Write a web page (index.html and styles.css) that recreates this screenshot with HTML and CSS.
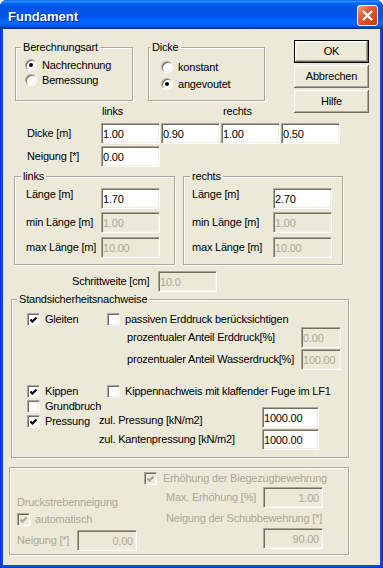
FILE: index.html
```html
<!DOCTYPE html>
<html lang="de">
  <head>
    <meta charset="UTF-8" />
    <title>Fundament</title>
    <link rel="stylesheet" href="styles.css">
  </head>
  <body>
    <div class="window">
      <div class="titlebar">
        <span class="title">Fundament</span>
        <span class="close-btn">
          <svg width="19" height="19" viewBox="0 0 19 19">
            <path d="M5 5 L14 14 M14 5 L5 14" stroke="#fff" stroke-width="2.4" fill="none" />
          </svg>
        </span>
      </div>

      <div class="client">
        <div class="top">
          <div class="top-left">
            <div class="groups">
              <fieldset class="group calc-group">
                <legend>Berechnungsart</legend>
                <div class="group-body">
                  <label class="option"><span class="radio checked"></span>Nachrechnung</label>
                  <label class="option"><span class="radio"></span>Bemessung</label>
                </div>
              </fieldset>
              <fieldset class="group thick-group">
                <legend>Dicke</legend>
                <div class="group-body">
                  <label class="option"><span class="radio"></span>konstant</label>
                  <label class="option"><span class="radio checked"></span>angevoutet</label>
                </div>
              </fieldset>
            </div>
            <div class="col-heads">
              <span class="head-links">links</span>
              <span>rechts</span>
            </div>
          </div>
          <div class="buttons">
            <button class="btn btn-default">OK</button>
            <button class="btn">Abbrechen</button>
            <button class="btn">Hilfe</button>
          </div>
        </div>

        <div class="field-row dicke-row">
          <span class="row-label">Dicke [m]</span>
          <input class="edit" value="1.00">
          <input class="edit" value="0.90">
          <input class="edit" value="1.00">
          <input class="edit" value="0.50">
        </div>
        <div class="field-row neigung-row">
          <span class="row-label">Neigung [*]</span>
          <input class="edit" value="0.00">
        </div>

        <div class="sides">
          <fieldset class="group side-group side-links">
            <legend>links</legend>
            <div class="group-body">
              <div class="len-row"><span class="len-label top-label">Länge [m]</span><input class="edit" value="1.70"></div>
              <div class="len-row"><span class="len-label">min Länge [m]</span><input class="edit" value="1.00" disabled></div>
              <div class="len-row"><span class="len-label">max Länge [m]</span><input class="edit" value="10.00" disabled></div>
            </div>
          </fieldset>
          <fieldset class="group side-group side-rechts">
            <legend>rechts</legend>
            <div class="group-body">
              <div class="len-row"><span class="len-label top-label">Länge [m]</span><input class="edit" value="2.70"></div>
              <div class="len-row"><span class="len-label">min Länge [m]</span><input class="edit" value="1.00" disabled></div>
              <div class="len-row"><span class="len-label">max Länge [m]</span><input class="edit" value="10.00" disabled></div>
            </div>
          </fieldset>
        </div>

        <div class="field-row step-row">
          <span class="step-label">Schrittweite [cm]</span>
          <input class="edit" value="10.0" disabled>
        </div>

        <fieldset class="group checks-group">
          <legend>Standsicherheitsnachweise</legend>
          <div class="group-body">
            <div class="slide-block">
              <label class="check col-a">
                <span class="check-box"><svg width="11" height="11"><polyline points="2.5,5.5 4.5,7.5 8.5,3.5" /></svg></span>Gleiten
              </label>
              <div class="col-b">
                <label class="check"><span class="check-box"></span>passiven Erddruck berücksichtigen</label>
                <div class="pct-row">
                  <span class="pct-label">prozentualer Anteil Erddruck[%]</span>
                  <input class="edit pct-edit" value="0.00" disabled>
                </div>
                <div class="pct-row">
                  <span class="pct-label">prozentualer Anteil Wasserdruck[%]</span>
                  <input class="edit pct-edit" value="100.00" disabled>
                </div>
              </div>
            </div>

            <div class="tilt-row">
              <label class="check col-a">
                <span class="check-box"><svg width="11" height="11"><polyline points="2.5,5.5 4.5,7.5 8.5,3.5" /></svg></span>Kippen
              </label>
              <label class="check"><span class="check-box"></span>Kippennachweis mit klaffender Fuge im LF1</label>
            </div>

            <div class="press-block">
              <div class="press-checks">
                <label class="check"><span class="check-box"></span>Grundbruch</label>
                <label class="check">
                  <span class="check-box"><svg width="11" height="11"><polyline points="2.5,5.5 4.5,7.5 8.5,3.5" /></svg></span>Pressung
                </label>
              </div>
              <div class="press-fields">
                <div class="press-row">
                  <span class="press-label first-label">zul. Pressung [kN/m2]</span>
                  <input class="edit press-edit" value="1000.00">
                </div>
                <div class="press-row">
                  <span class="press-label">zul. Kantenpressung [kN/m2]</span>
                  <input class="edit press-edit" value="1000.00">
                </div>
              </div>
            </div>
          </div>
        </fieldset>

        <fieldset class="group shear-group">
          <div class="shear-body">
            <div class="shear-left">
              <div class="dim strut-title">Druckstrebenneigung</div>
              <label class="check dim auto-check">
                <span class="check-box off"><svg width="11" height="11"><polyline points="2.5,5.5 4.5,7.5 8.5,3.5" /></svg></span>automatisch
              </label>
              <div class="strut-row">
                <span class="dim strut-label">Neigung [*]</span>
                <input class="edit num-edit" value="0.00" disabled>
              </div>
            </div>
            <div class="shear-right">
              <label class="check dim raise-check">
                <span class="check-box off"><svg width="11" height="11"><polyline points="2.5,5.5 4.5,7.5 8.5,3.5" /></svg></span>Erhöhung der Biegezugbewehrung
              </label>
              <div class="raise-row">
                <span class="dim raise-label">Max. Erhöhung [%]</span>
                <input class="edit num-edit" value="1.00" disabled>
              </div>
              <div class="dim stirrup-title">Neigung der Schubbewehrung [*]</div>
              <div class="stirrup-row">
                <input class="edit num-edit" value="90.00" disabled>
              </div>
            </div>
          </div>
        </fieldset>
      </div>
    </div>
  </body>
</html>
```

FILE: styles.css
```css
* {
  box-sizing: border-box;
}
body {
  margin: 0;
  background: #fff;
  font-family: "Liberation Sans", Arial, sans-serif;
  font-size: 11px;
  line-height: 13px;
  letter-spacing: -0.2px;
  color: #000;
}

/* window frame */
.window {
  width: 383px;
  height: 568px;
  display: flex;
  flex-direction: column;
  background: #0b4ae0;
  border-radius: 7px 7px 0 0;
  overflow: hidden;
  box-shadow: inset 1px 0 #0831d9, inset -1px 0 #0831d9, inset 0 -1px #0831d9;
}
.titlebar {
  height: 29px;
  flex: none;
  display: flex;
  align-items: center;
  padding: 0 5px 0 8px;
  background: linear-gradient(
    to bottom,
    #0058ee 0%,
    #3593ff 4%,
    #288eff 6%,
    #127dff 8%,
    #036ffc 10%,
    #0262ee 14%,
    #0057e5 20%,
    #0054e3 24%,
    #0055eb 56%,
    #005bf5 66%,
    #026afe 76%,
    #0062ef 86%,
    #0052d6 92%,
    #0040ab 94%,
    #003092 100%
  );
}
.title {
  flex: 1;
  margin-top: 4px;
  color: #fff;
  font-weight: bold;
  font-size: 13px;
  letter-spacing: 0;
  text-shadow: 1px 1px #0a1883;
}
.close-btn {
  width: 21px;
  height: 21px;
  margin-top: 2px;
  border: 1px solid #fff;
  border-radius: 3px;
  background: linear-gradient(135deg, #f0a080 0%, #e2603a 35%, #d64a1c 70%, #c13a10 100%);
}
.close-btn svg {
  display: block;
}
.client {
  flex: 1;
  margin: 0 3px 3px;
  background: #ece9d8;
}

/* group boxes */
.group {
  margin: 0;
  padding: 0;
  min-width: 0;
  border: 1px solid #aca899;
  box-shadow: inset 1px 1px #fff, 1px 1px #fff;
}
.group legend {
  margin-left: 5px;
  padding: 0 2px;
  line-height: 13px;
  background: #ece9d8;
}

/* radios and checkboxes */
.option {
  display: flex;
  align-items: center;
  height: 14px;
}
.radio {
  flex: none;
  width: 12px;
  height: 12px;
  margin-right: 5px;
  display: flex;
  align-items: center;
  justify-content: center;
  border-radius: 50%;
  background: #fff;
  border: 1px solid;
  border-color: #aca899 #fff #fff #aca899;
  box-shadow: inset 1px 1px #716f64, inset -1px -1px #f1efe2;
}
.radio.checked::after {
  content: "";
  width: 4px;
  height: 4px;
  border-radius: 50%;
  background: #000;
}
.check {
  display: flex;
  align-items: center;
  height: 15px;
}
.check-box {
  flex: none;
  width: 13px;
  height: 13px;
  margin-right: 5px;
  background: #fff;
  border: 1px solid;
  border-color: #aca899 #fff #fff #aca899;
  box-shadow: inset 1px 1px #716f64, inset -1px -1px #f1efe2;
}
.check-box svg {
  display: block;
}
.check-box polyline {
  fill: none;
  stroke: #000;
  stroke-width: 2.1;
}
.check-box.off {
  background: #ece9d8;
}
.check-box.off polyline {
  stroke: #aca899;
}

/* push buttons */
.btn {
  width: 75px;
  height: 23px;
  padding: 0;
  font: inherit;
  letter-spacing: inherit;
  color: #000;
  background: #ece9d8;
  border: none;
  box-shadow: inset -1px -1px #716f64, inset 1px 1px #fff, inset -2px -2px #aca899, inset 2px 2px #f1efe2;
}
.btn-default {
  border: 1px solid #000;
}

/* edit fields */
.edit {
  flex: none;
  width: 59px;
  height: 21px;
  margin: 0;
  padding: 0 1px;
  font: inherit;
  letter-spacing: inherit;
  color: #000;
  background: #fff;
  border: 1px solid;
  border-color: #aca899 #fff #fff #aca899;
  box-shadow: inset 1px 1px #716f64, inset -1px -1px #f1efe2;
  outline: none;
}
.edit:disabled {
  color: #aca899;
  background: #ece9d8;
}
.dim {
  color: #aca899;
}

/* top area */
.top {
  display: flex;
  padding-top: 11px;
}
.top-left {
  width: 279px;
  margin-left: 12px;
}
.groups {
  display: flex;
  gap: 15px;
  margin-top: 1px;
}
.calc-group {
  width: 118px;
  height: 60px;
}
.calc-group .group-body {
  padding: 4px 0 0 9px;
}
.calc-group .option + .option {
  margin-top: 1px;
}
.thick-group {
  width: 117px;
  height: 60px;
}
.thick-group legend {
  margin-left: 1px;
}
.thick-group .group-body {
  padding: 6px 0 0 12px;
}
.thick-group .option + .option {
  margin-top: 3px;
}
.col-heads {
  display: flex;
  margin-top: 4px;
}
.head-links {
  width: 121px;
  margin-left: 87px;
}
.buttons {
  display: flex;
  flex-direction: column;
  gap: 2px;
}

/* thickness rows */
.field-row {
  display: flex;
  align-items: center;
}
.dicke-row {
  margin-top: 5px;
  padding-left: 24px;
  gap: 1px;
}
.neigung-row {
  margin-top: 2px;
  padding-left: 24px;
}
.row-label {
  width: 73px;
}
.neigung-row .row-label {
  width: 74px;
}

/* left / right length groups */
.sides {
  display: flex;
  gap: 8px;
  margin-top: 3px;
  padding-left: 11px;
}
.side-group {
  height: 95px;
}
.side-group legend {
  margin-left: 6px;
}
.side-links {
  width: 161px;
}
.side-links .group-body {
  padding: 5px 0 0 11px;
}
.side-links .len-label {
  width: 75px;
}
.side-rechts {
  width: 160px;
}
.side-rechts .group-body {
  padding: 5px 0 0 8px;
}
.side-rechts .len-label {
  width: 81px;
}
.len-row {
  display: flex;
  align-items: center;
  height: 21px;
}
.len-row + .len-row {
  margin-top: 3px;
}
.len-row:last-child {
  margin-top: 4px;
}
.top-label {
  align-self: flex-start;
}

.step-row {
  margin-top: 6px;
  padding-left: 69px;
}
.step-label {
  width: 86px;
}

/* safety checks */
.checks-group {
  width: 338px;
  height: 165px;
  margin-top: 1px;
  margin-left: 8px;
}
.checks-group .group-body {
  padding: 6px 0 0 15px;
}
.slide-block,
.tilt-row,
.press-block {
  display: flex;
}
.col-a {
  width: 80px;
  flex: none;
}
.pct-row {
  display: flex;
  align-items: center;
  height: 21px;
  padding-left: 20px;
}
.pct-row + .pct-row {
  margin-top: 1px;
}
.pct-label {
  width: 174px;
}
.pct-edit {
  width: 40px;
}
.tilt-row {
  margin-top: 14px;
}
.press-checks {
  width: 72px;
  flex: none;
}
.press-fields {
  padding-top: 8px;
}
.press-row {
  display: flex;
  align-items: center;
  height: 21px;
}
.press-row + .press-row {
  margin-top: 1px;
}
.press-label {
  width: 163px;
}
.first-label {
  align-self: flex-start;
  margin-top: 7px;
}
.press-edit {
  width: 57px;
}

/* shear reinforcement (disabled) */
.shear-group {
  width: 340px;
  height: 88px;
  margin-top: 9px;
  margin-left: 6px;
}
.shear-body {
  display: flex;
  padding-left: 7px;
}
.shear-left {
  width: 127px;
  flex: none;
  padding-top: 28px;
}
.auto-check {
  margin-top: 3px;
}
.strut-row {
  display: flex;
  align-items: center;
  margin-top: 3px;
}
.strut-label {
  width: 60px;
}
.num-edit {
  width: 60px;
  text-align: right;
  padding-right: 3px;
}
.raise-check {
  margin-top: 3px;
}
.raise-check .check-box {
  margin-right: 6px;
}
.raise-row {
  display: flex;
  align-items: center;
  margin-top: 1px;
  padding-left: 22px;
}
.raise-label {
  width: 97px;
}
.stirrup-title {
  margin-top: 4px;
  padding-left: 22px;
}
.stirrup-row {
  margin-top: 3px;
  padding-left: 119px;
}
.stirrup-row .edit {
  display: block;
}
```
